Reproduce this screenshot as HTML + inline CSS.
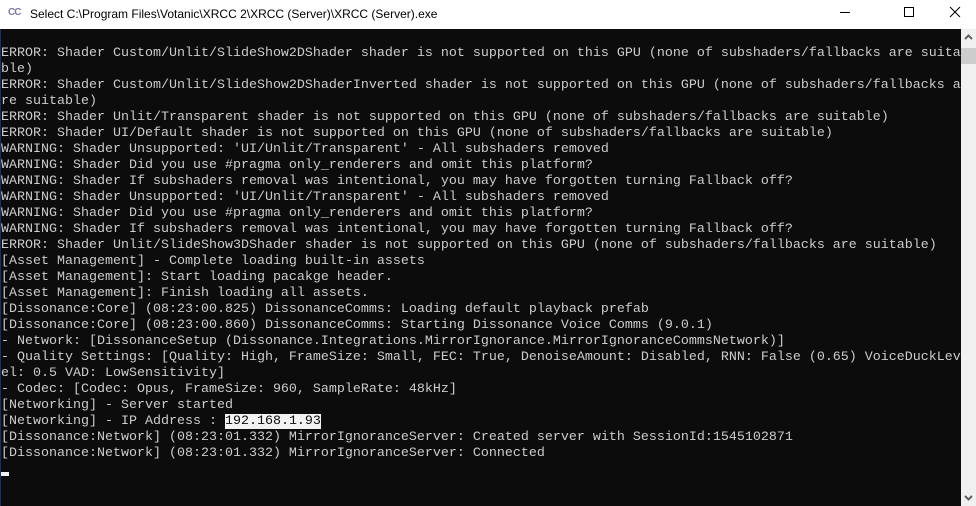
<!DOCTYPE html>
<html><head><style>
html,body{margin:0;padding:0;width:976px;height:506px;overflow:hidden;background:#0c0c0c}
.title{position:absolute;left:0;top:0;width:976px;height:29px;background:#fff;font-family:"Liberation Sans",sans-serif;font-size:12px;color:#000}
.title .t{position:absolute;left:30px;top:7px}
.icon{position:absolute;left:8px;top:7px;font-size:10px;font-weight:bold;color:#7a7aa0;letter-spacing:-1px}
.con{position:absolute;left:1px;top:46px;width:960px;font-family:"Liberation Mono",monospace;font-size:13.33px;line-height:16px;color:#cccccc;white-space:pre}
.sb{position:absolute;left:961px;top:29px;width:15px;height:477px;background:#f0f0f0}
.thumb{position:absolute;left:961px;top:48px;width:15px;height:16px;background:#cdcdcd}
.hl{background:#f2f2f2;color:#0c0c0c}
.cur{position:absolute;left:1px;top:472px;width:8px;height:4px;background:#f2f2f2}
.lb{position:absolute;left:0;top:29px;width:1px;height:477px;background:#1f3050}
</style></head><body>
<div class="title"><span class="icon">CC</span><span class="t">Select C:\Program Files\Votanic\XRCC 2\XRCC (Server)\XRCC (Server).exe</span>
<svg style="position:absolute;left:840px;top:6px" width="130" height="16"><line x1="0" y1="6.5" x2="10" y2="6.5" stroke="#000"/><rect x="64.5" y="1.5" width="9" height="9" fill="none" stroke="#000"/><path d="M110 1 L120 11 M120 1 L110 11" stroke="#000"/></svg>
</div>
<div class="lb"></div>
<div class="con">ERROR: Shader Custom/Unlit/SlideShow2DShader shader is not supported on this GPU (none of subshaders/fallbacks are suita
ble)
ERROR: Shader Custom/Unlit/SlideShow2DShaderInverted shader is not supported on this GPU (none of subshaders/fallbacks a
re suitable)
ERROR: Shader Unlit/Transparent shader is not supported on this GPU (none of subshaders/fallbacks are suitable)
ERROR: Shader UI/Default shader is not supported on this GPU (none of subshaders/fallbacks are suitable)
WARNING: Shader Unsupported: 'UI/Unlit/Transparent' - All subshaders removed
WARNING: Shader Did you use #pragma only_renderers and omit this platform?
WARNING: Shader If subshaders removal was intentional, you may have forgotten turning Fallback off?
WARNING: Shader Unsupported: 'UI/Unlit/Transparent' - All subshaders removed
WARNING: Shader Did you use #pragma only_renderers and omit this platform?
WARNING: Shader If subshaders removal was intentional, you may have forgotten turning Fallback off?
ERROR: Shader Unlit/SlideShow3DShader shader is not supported on this GPU (none of subshaders/fallbacks are suitable)
[Asset Management] - Complete loading built-in assets
[Asset Management]: Start loading pacakge header.
[Asset Management]: Finish loading all assets.
[Dissonance:Core] (08:23:00.825) DissonanceComms: Loading default playback prefab
[Dissonance:Core] (08:23:00.860) DissonanceComms: Starting Dissonance Voice Comms (9.0.1)
- Network: [DissonanceSetup (Dissonance.Integrations.MirrorIgnorance.MirrorIgnoranceCommsNetwork)]
- Quality Settings: [Quality: High, FrameSize: Small, FEC: True, DenoiseAmount: Disabled, RNN: False (0.65) VoiceDuckLev
el: 0.5 VAD: LowSensitivity]
- Codec: [Codec: Opus, FrameSize: 960, SampleRate: 48kHz]
[Networking] - Server started
[Networking] - IP Address : <span class="hl">192.168.1.93</span>
[Dissonance:Network] (08:23:01.332) MirrorIgnoranceServer: Created server with SessionId:1545102871
[Dissonance:Network] (08:23:01.332) MirrorIgnoranceServer: Connected</div>
<div class="cur"></div>
<div class="sb"></div>
<div class="thumb"></div>
<svg style="position:absolute;left:961px;top:29px" width="15" height="477"><path d="M4 10 L7.5 6.5 L11 10" stroke="#606060" stroke-width="2" fill="none"/><path d="M4 467 L7.5 470.5 L11 467" stroke="#606060" stroke-width="2" fill="none"/></svg>
</body></html>
